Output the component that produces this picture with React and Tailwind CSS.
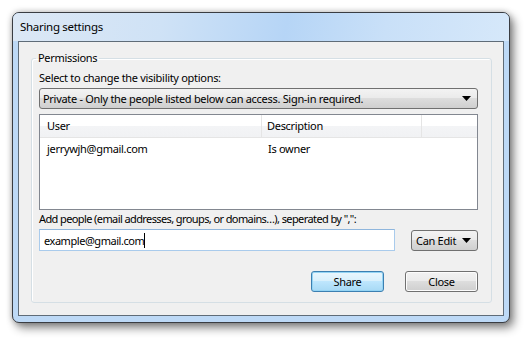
import React from "react";

function Arrow() {
  return (
    <svg width="9" height="5" viewBox="0 0 9 5" className="shrink-0">
      <path d="M0 0 H9 L4.5 5 Z" fill="#000" />
    </svg>
  );
}

export default function App() {
  return (
    <div
      className="w-[530px] h-[344px] bg-white p-[12px] text-[11px] tracking-[-0.3px] text-black whitespace-nowrap"
      style={{ fontFamily: '"Noto Sans", "Segoe UI", sans-serif' }}
    >
      <div className="w-[498px] h-[311px] rounded-[7px] border border-[#3a3d42] bg-[#bdd9f6] shadow-[4px_5px_10px_rgba(0,0,0,0.45),0_0_6px_rgba(0,0,0,0.25)] flex flex-col overflow-hidden">
        <div className="h-[28px] shrink-0 flex items-center pl-[7px] bg-[linear-gradient(100deg,#dce8f5_0%,#cfe2f6_30%,#b6d5f6_55%,#c9e0f8_75%,#d6e8fa_100%)]">
          <span className="text-[11.5px] leading-none pb-[1px]">Sharing settings</span>
        </div>
        <div className="mx-[5px] h-[275px] border border-[#5f6c78] bg-[#f0f0f0] flex flex-col">
          <fieldset className="mt-[8px] ml-[12px] mr-[11px] h-[253px] border border-[#d5dfe5] rounded-[3px] shadow-[inset_1px_1px_0_#fff] pl-[7px] pr-[13px] flex flex-col">
            <legend className="ml-[-3px] px-[2px] leading-[16px]">Permissions</legend>
            <div className="mt-[4px] leading-[16px]">Select to change the visibility options:</div>
            <div className="mt-[2px] h-[21px] rounded-[3px] border border-[#707070] bg-[linear-gradient(#f3f3f3,#ebebeb_45%,#dddddd_50%,#cfcfcf)] flex items-center pl-[3px] pr-[6px] justify-between">
              <span className="leading-none">Private - Only the people listed below can access. Sign-in required.</span>
              <Arrow />
            </div>
            <div className="mt-[5px] h-[96px] border border-[#828790] bg-white flex flex-col">
              <div className="h-[23px] shrink-0 flex border-b border-[#e5e5e5] bg-[linear-gradient(#ffffff,#ffffff_50%,#f3f4f6_50%,#f1f2f4)]">
                <div className="w-[222px] pl-[7px] flex items-center border-r border-[#e5e5e5]">User</div>
                <div className="w-[160px] pl-[5px] flex items-center border-r border-[#e5e5e5]">Description</div>
                <div className="flex-1" />
              </div>
              <div className="h-[22px] flex items-center">
                <div className="w-[222px] pl-[7px]">jerrywjh@gmail.com</div>
                <div className="pl-[6px]">Is owner</div>
              </div>
            </div>
            <div className="mt-[1px] leading-[16px] tracking-[-0.6px]">Add people (email addresses, groups, or domains…), seperated by ",":</div>
            <div className="mt-[2px] flex items-center justify-between">
              <div className="w-[356px] h-[22px] border border-[#a9cbec] border-t-[#8fb6dd] bg-white flex items-center pl-[4px]">
                <span className="leading-none tracking-[-0.45px]">example@gmail.com</span>
                <span className="w-px h-[15px] bg-black" />
              </div>
              <div className="w-[67px] h-[21px] rounded-[3px] border border-[#707070] bg-[linear-gradient(#f3f3f3,#ebebeb_45%,#dddddd_50%,#cfcfcf)] flex items-center justify-between pl-[4px] pr-[6px]">
                <span className="leading-none">Can Edit</span>
                <Arrow />
              </div>
            </div>
            <div className="mt-[20px] flex justify-end gap-[21px]">
              <button className="w-[73px] h-[21px] rounded-[3px] border border-[#3c7fb1] shadow-[inset_0_0_0_1px_#94d4f4] bg-[linear-gradient(#eaf6fd,#d9f0fc_45%,#bee6fd_50%,#a7d9f5)] flex items-center justify-center leading-none">Share</button>
              <button className="w-[73px] h-[21px] rounded-[3px] border border-[#707070] shadow-[inset_0_0_0_1px_#fcfcfc] bg-[linear-gradient(#f2f2f2,#ebebeb_45%,#dddddd_50%,#cfcfcf)] flex items-center justify-center leading-none">Close</button>
            </div>
          </fieldset>
        </div>
      </div>
    </div>
  );
}
